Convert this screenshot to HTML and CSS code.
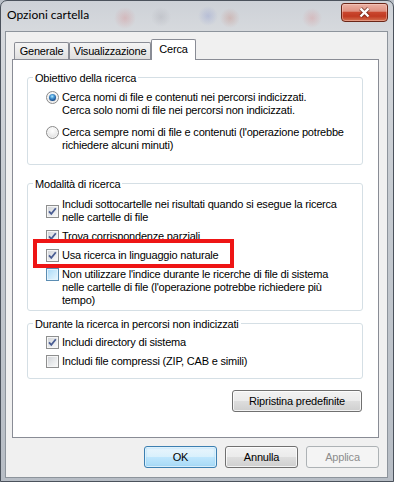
FILE: index.html
```html
<!DOCTYPE html>
<html lang="it">
<head>
<meta charset="utf-8">
<title>Opzioni cartella</title>
<link rel="stylesheet" href="styles.css">
</head>
<body>
<div class="window">
  <div class="titlebar">
    <span class="title">Opzioni cartella</span>
    <div class="close">
      <svg width="13" height="11" viewBox="0 0 13 11"><path d="M2.5 1.5 L10.5 9.5 M10.5 1.5 L2.5 9.5" stroke="#4a1408" stroke-width="4.2" stroke-opacity=".55" fill="none"/><path d="M2.5 1.5 L10.5 9.5 M10.5 1.5 L2.5 9.5" stroke="#fff" stroke-width="2.4" fill="none"/></svg>
    </div>
  </div>
  <div class="client">
    <div class="tabs">
      <div class="tab w-gen">Generale</div>
      <div class="tab w-vis">Visualizzazione</div>
      <div class="tab w-cer selected">Cerca</div>
    </div>
    <div class="panel">
      <div class="group g1">
        <div class="glabel">Obiettivo della ricerca</div>
        <div class="opt top r1"><span class="radio"><span class="dot"></span></span><span class="txt">Cerca nomi di file e contenuti nei percorsi indicizzati.<br>Cerca solo nomi di file nei percorsi non indicizzati.</span></div>
        <div class="opt top r2"><span class="radio"></span><span class="txt">Cerca sempre nomi di file e contenuti (l'operazione potrebbe<br>richiedere alcuni minuti)</span></div>
      </div>
      <div class="group g2">
        <div class="glabel">Modalità di ricerca</div>
        <div class="opt c1"><span class="cb"><svg width="11" height="11" viewBox="0 0 11 11"><path d="M2 5.3 L4.3 7.9 L8.8 2.3" stroke="#4a5d93" stroke-width="1.8" fill="none"/></svg></span><span class="txt">Includi sottocartelle nei risultati quando si esegue la ricerca<br>nelle cartelle di file</span></div>
        <div class="opt c2"><span class="cb"><svg width="11" height="11" viewBox="0 0 11 11"><path d="M2 5.3 L4.3 7.9 L8.8 2.3" stroke="#4a5d93" stroke-width="1.8" fill="none"/></svg></span><span class="txt">Trova corrispondenze parziali</span></div>
        <div class="opt c3 marked"><span class="cb"><svg width="11" height="11" viewBox="0 0 11 11"><path d="M2 5.3 L4.3 7.9 L8.8 2.3" stroke="#4a5d93" stroke-width="1.8" fill="none"/></svg></span><span class="txt">Usa ricerca in linguaggio naturale</span><span class="mark"></span></div>
        <div class="opt top c4"><span class="cb hot"></span><span class="txt">Non utilizzare l'indice durante le ricerche di file di sistema<br>nelle cartelle di file (l'operazione potrebbe richiedere più<br>tempo)</span></div>
      </div>
      <div class="group g3">
        <div class="glabel">Durante la ricerca in percorsi non indicizzati</div>
        <div class="opt c5"><span class="cb"><svg width="11" height="11" viewBox="0 0 11 11"><path d="M2 5.3 L4.3 7.9 L8.8 2.3" stroke="#4a5d93" stroke-width="1.8" fill="none"/></svg></span><span class="txt">Includi directory di sistema</span></div>
        <div class="opt c6"><span class="cb"></span><span class="txt">Includi file compressi (ZIP, CAB e simili)</span></div>
      </div>
      <div class="panel-actions">
        <button class="btn restore">Ripristina predefinite</button>
      </div>
    </div>
    <div class="actions">
      <button class="btn default">OK</button>
      <button class="btn">Annulla</button>
      <button class="btn disabled">Applica</button>
    </div>
  </div>
</div>
</body>
</html>
```
FILE: styles.css
```css
* { box-sizing: border-box; }
html, body { margin: 0; padding: 0; }
body {
  width: 394px;
  height: 482px;
  overflow: hidden;
  background: #b9bfc7;
  font-family: "Liberation Sans", Arial, sans-serif;
  font-size: 11px;
  letter-spacing: -0.2px;
  color: #000;
}
.window {
  width: 394px;
  height: 482px;
  border: 1px solid #4b525c;
  border-radius: 7px 7px 0 0;
  padding: 0 5px 3px 4px;
  display: flex;
  flex-direction: column;
  background:
    radial-gradient(circle at 124px 17px, rgba(214, 110, 110, .28), transparent 11px),
    radial-gradient(circle at 160px 16px, rgba(150, 150, 160, .25), transparent 10px),
    radial-gradient(circle at 207px 15px, rgba(90, 110, 200, .22), transparent 10px),
    radial-gradient(circle at 229px 17px, rgba(190, 100, 80, .25), transparent 10px),
    radial-gradient(circle at 311px 17px, rgba(220, 110, 110, .25), transparent 10px),
    linear-gradient(180deg, #cdd1d7 0%, #d6d9dd 6%, #c6cbd1 40%, #b7bdc5 100%);
}
.titlebar {
  height: 30px;
  flex: none;
  display: flex;
  align-items: flex-start;
  justify-content: space-between;
  padding-left: 2px;
}
.title {
  margin-top: 6px;
  font-family: Lato, "Liberation Sans", sans-serif;
  font-size: 12px;
  line-height: 15px;
  letter-spacing: 0;
  color: #000;
}
.close {
  margin-top: 2px;
  width: 47px;
  height: 19px;
  border: 1px solid #6a2618;
  border-radius: 3px 3px 4px 4px;
  background: linear-gradient(180deg, #eab1a4 0%, #df9282 42%, #c9462e 50%, #c13a22 72%, #d4704f 100%);
  box-shadow: inset 0 0 0 1px rgba(255, 220, 210, .4);
  display: flex;
  align-items: center;
  justify-content: center;
}
.client {
  flex: 1;
  border: 1px solid #8d949c;
  background: #f0f0f0;
  padding: 7px 8px 9px 6px;
  display: flex;
  flex-direction: column;
}
.tabs {
  height: 20px;
  flex: none;
  display: flex;
  align-items: flex-end;
  padding-left: 2px;
}
.tab {
  height: 17px;
  border: 1px solid #898c95;
  border-bottom: 0;
  border-radius: 2px 2px 0 0;
  background: linear-gradient(180deg, #f4f4f4 0%, #ebebeb 50%, #dedede 100%);
  text-align: center;
  line-height: 16px;
  white-space: nowrap;
}
.w-gen { width: 55px; }
.w-vis { width: 82px; }
.w-cer { width: 45px; }
.tab.selected {
  height: 21px;
  margin-bottom: -1px;
  background: #fff;
  line-height: 19px;
  position: relative;
  z-index: 1;
}
.panel {
  height: 379px;
  flex: none;
  border: 1px solid #898c95;
  background: #fff;
  padding: 17px 15px 0 14px;
  display: flex;
  flex-direction: column;
}
.group {
  border: 1px solid #d5dfe5;
  border-radius: 3px;
  padding: 0 4px 0 18px;
  display: flex;
  flex-direction: column;
  align-items: flex-start;
}
.g1 { padding-bottom: 12px; }
.g2 { margin-top: 18px; padding-bottom: 3px; }
.g3 { margin-top: 12px; padding-bottom: 10px; }
.glabel {
  margin: -6px 0 0 -13px;
  padding: 0 2px;
  background: #fff;
  line-height: 13px;
  white-space: nowrap;
}
.opt {
  display: flex;
  align-items: center;
  gap: 3px;
  line-height: 13px;
  white-space: nowrap;
}
.opt.top { align-items: flex-start; }
.r1 { margin-top: 6px; }
.r2 { margin-top: 9px; }
.c1 { margin-top: 7px; }
.c2, .c3, .c4 { margin-top: 6px; }
.c5 { margin-top: 5px; }
.c6 { margin-top: 6px; }
.marked { position: relative; }
.mark {
  position: absolute;
  left: -13px;
  top: -10px;
  width: 201px;
  height: 29px;
  border: 4px solid #ee1515;
}
.radio {
  flex: none;
  width: 13px;
  height: 13px;
  border-radius: 50%;
  border: 1px solid #8b8b8b;
  background: radial-gradient(circle at 50% 35%, #ffffff 0%, #f2f2f2 35%, #d4d4d4 100%);
  box-shadow: inset 0 0 0 1px rgba(255, 255, 255, .6);
  display: flex;
  align-items: center;
  justify-content: center;
}
.dot {
  width: 7px;
  height: 7px;
  border-radius: 50%;
  background: radial-gradient(circle at 45% 35%, #b4ecff 0%, #4a9ad6 32%, #1c5394 68%, #0d2c55 100%);
}
.cb {
  flex: none;
  width: 13px;
  height: 13px;
  border: 1px solid #8e8f8f;
  background: linear-gradient(135deg, #cdd0d5 0%, #e6e8ea 50%, #fbfbfb 100%);
  box-shadow: inset 0 0 0 1px #f6f6f6;
  display: flex;
  align-items: center;
  justify-content: center;
}
.cb.hot {
  border-color: #5b8db3;
  background: linear-gradient(135deg, #a9d8f7 0%, #c9e8fb 50%, #eaf7fe 100%);
  box-shadow: inset 0 0 0 1px #e3f3fd;
}
.panel-actions {
  margin-top: 11px;
  display: flex;
  justify-content: flex-end;
  padding-right: 1px;
}
.btn {
  height: 22px;
  width: 73px;
  padding: 0;
  font-family: "Liberation Sans", Arial, sans-serif;
  font-size: 11px;
  letter-spacing: -0.2px;
  color: #000;
  border: 1px solid #707070;
  border-radius: 3px;
  background: linear-gradient(180deg, #f2f2f2 0%, #ebebeb 48%, #dddddd 52%, #cfcfcf 100%);
  box-shadow: inset 0 0 0 1px rgba(255, 255, 255, .75);
  text-align: center;
  line-height: 20px;
}
.btn.restore { width: 130px; }
.actions {
  margin-top: 8px;
  display: flex;
  justify-content: flex-end;
  gap: 8px;
}
.btn.default {
  border-color: #3c7fb1;
  background: linear-gradient(180deg, #eaf6fd 0%, #d9f0fc 48%, #bee6fd 52%, #a7d9f5 100%);
  box-shadow: inset 0 0 0 1px rgba(255, 255, 255, .6), inset 0 0 2px 1px #9ad4f6;
}
.btn.disabled {
  color: #8d8d8d;
  border-color: #adb2b5;
  background: #f4f4f4;
  box-shadow: none;
}
```
